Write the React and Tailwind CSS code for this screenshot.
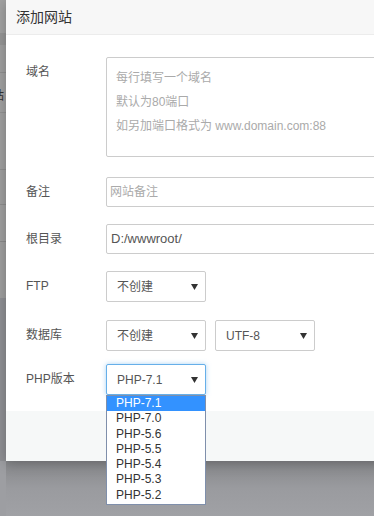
import React from "react";

const font = { fontFamily: '"Liberation Sans", "Noto Sans CJK SC", sans-serif' };

function Arrow() {
  return (
    <svg width="7" height="6" viewBox="0 0 7 6" className="shrink-0">
      <path d="M0 0 L7 0 L3.5 6 Z" fill="#333" />
    </svg>
  );
}

function Select({ value, width = "w-[100px]", focused = false }) {
  return (
    <div
      className={`${width} h-[31px] flex items-center justify-between pl-[10px] pr-[7px] rounded-[2px] bg-white border ${
        focused
          ? "border-[#66afe9] shadow-[0_0_5px_rgba(102,175,233,0.55)]"
          : "border-[#cccccc]"
      } text-[12px] text-[#555]`}
    >
      <span>{value}</span>
      <Arrow />
    </div>
  );
}

function Label({ children }) {
  return (
    <div className="w-[80px] shrink-0 h-[30px] leading-[30px] text-[12px] text-[#555]">
      {children}
    </div>
  );
}

export default function App() {
  const versions = ["PHP-7.1", "PHP-7.0", "PHP-5.6", "PHP-5.5", "PHP-5.4", "PHP-5.3", "PHP-5.2"];
  return (
    <div className="relative w-[374px] h-[516px] overflow-hidden bg-[#9d9ea2] flex" style={font}>
      {/* background page strip */}
      <div className="w-[6px] shrink-0 flex flex-col">
        <div className="h-[33px] bg-[#a2a2a2]" />
        <div className="h-[12px] bg-[#969696]" />
        <div className="h-[28px] bg-[#a0a0a0] border-b border-[#909090]" />
        <div className="h-[40px] bg-[#a1a1a1] border-b border-[#929292] relative overflow-hidden">
          <span className="absolute left-[-8px] top-[14px] text-[12px] text-[#333]">站</span>
        </div>
        <div className="h-[57px] bg-[#a0a0a0] border-b border-[#909090]" />
        <div className="h-[35px] bg-[#9f9f9f] border-b border-[#8e8e8e]" />
        <div className="h-[37px] bg-[#a0a0a0] border-b border-[#8a8a8a]" />
        <div className="h-[56px] bg-[#9f9f9f]" />
        <div className="h-[163px] bg-[#8f9094]" />
        <div className="flex-1 bg-[#9d9ea2]" />
      </div>

      <div className="flex flex-col shrink-0 w-[420px]">
        {/* modal */}
        <div className="relative h-[461px] bg-white flex flex-col shadow-[0_2px_12px_rgba(0,0,0,0.25)]">
          <div className="h-[35px] shrink-0 bg-[#f7f7f7] border-b border-[#ececec] pl-[10px] flex items-center text-[14px] text-[#333]">
            添加网站
          </div>

          <div className="flex-1 pl-[20px] pt-[22px] flex flex-col">
            <div className="flex">
              <Label>域名</Label>
              <div className="w-[300px] h-[100px] border border-[#cccccc] rounded-[2px] pl-[9px] pt-[8px] text-[12px] leading-[24px] text-[#aaa]">
                <div>每行填写一个域名</div>
                <div>默认为80端口</div>
                <div>如另加端口格式为 www.domain.com:88</div>
              </div>
            </div>

            <div className="flex mt-[20px]">
              <Label>备注</Label>
              <div className="w-[300px] h-[30px] border border-[#cccccc] rounded-[2px] pl-[3px] flex items-center text-[12px] text-[#aaa]">
                网站备注
              </div>
            </div>

            <div className="flex mt-[17px]">
              <Label>根目录</Label>
              <div className="w-[300px] h-[30px] border border-[#cccccc] rounded-[2px] pl-[4px] flex items-center text-[13px] text-[#555]">
                D:/wwwroot/
              </div>
            </div>

            <div className="flex mt-[17px]">
              <Label>FTP</Label>
              <Select value="不创建" />
            </div>

            <div className="flex mt-[18px]">
              <Label>数据库</Label>
              <div className="flex gap-[9px]">
                <Select value="不创建" />
                <Select value="UTF-8" />
              </div>
            </div>

            <div className="flex mt-[13px]">
              <Label>PHP版本</Label>
              <div className="relative">
                <Select value="PHP-7.1" focused />
                <div className="absolute left-0 top-[31px] w-[100px] bg-white border border-[#7f8fab] pb-[1px] z-10">
                  {versions.map((v, i) => (
                    <div
                      key={v}
                      className={`h-[15.3px] leading-[15.3px] pl-[9px] text-[12px] ${
                        i === 0 ? "bg-[#3392ff] text-white" : "text-[#333]"
                      }`}
                    >
                      {v}
                    </div>
                  ))}
                </div>
              </div>
            </div>
          </div>

          <div className="h-[50px] shrink-0 bg-[#f6f8f8]" />
        </div>
        {/* shadow area */}
        <div className="flex-1 bg-gradient-to-b from-[#86878a] via-[#9a9b9f] to-[#a0a1a5]" />
      </div>
    </div>
  );
}
